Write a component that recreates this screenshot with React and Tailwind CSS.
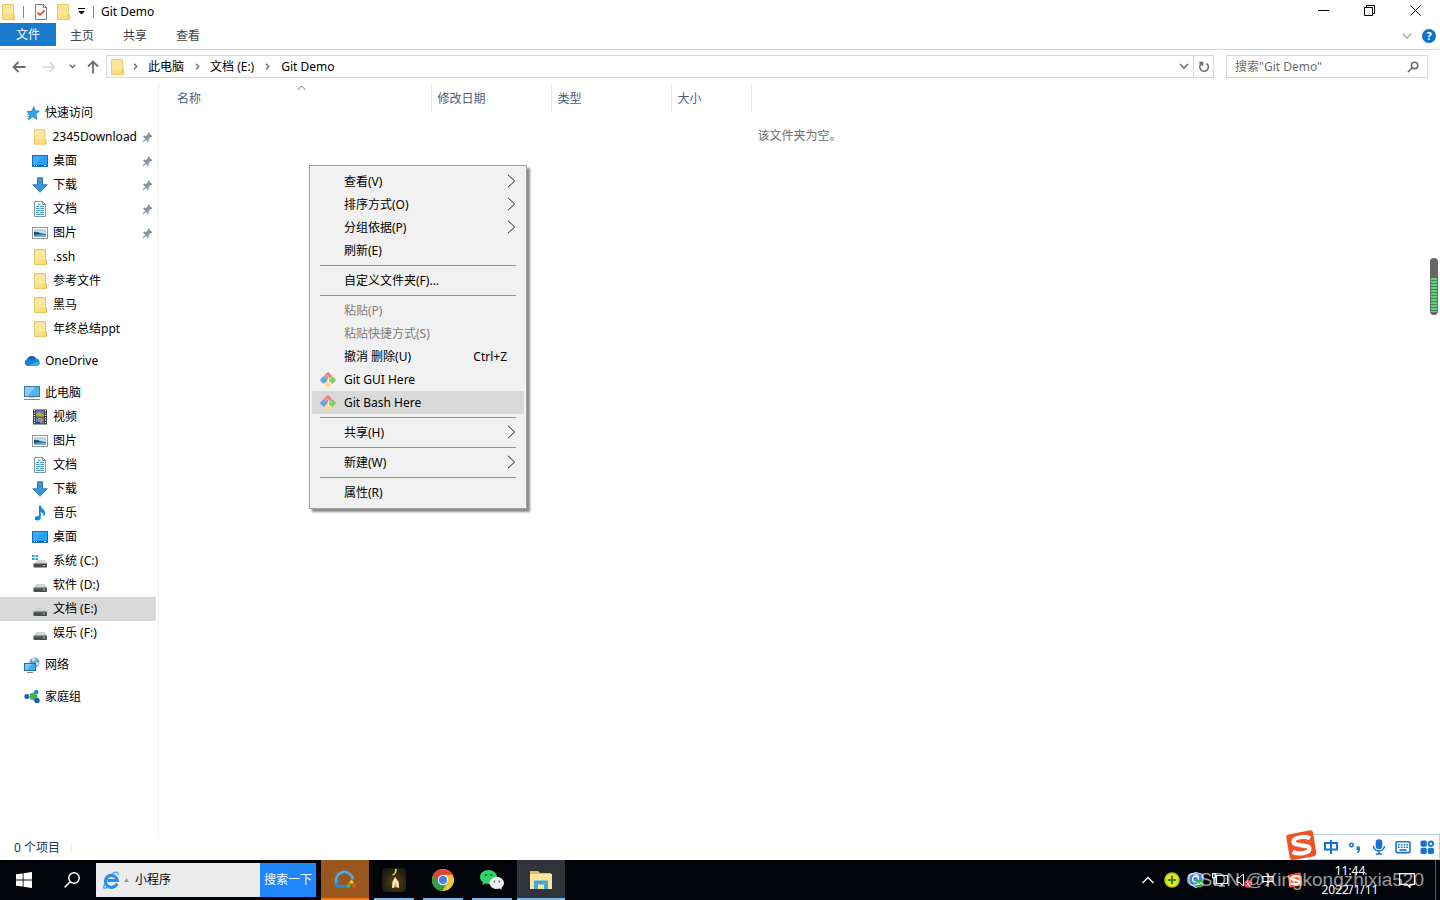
import React from "react";

/* ---------- icons ---------- */

const Folder = () => (
  <svg width="16" height="16" viewBox="0 0 16 16" aria-hidden="true">
    <path d="M2.500 .5h11V11l1-1v5.500h-12z" fill="#fbdf86" stroke="#eac763" />
    <path d="M3 1h10v9H3z" fill="#fce69b" />
    <path d="M12.500 15V11l1.500-1.400V15z" fill="#f6cf5d" />
  </svg>
);

const CheckPage = () => (
  <svg width="14" height="16" viewBox="0 0 14 16" aria-hidden="true">
    <path d="M1.500 .5h8l3 3v12h-11z" fill="#fdfdfd" stroke="#7d7d7d" />
    <path d="M9.500.5v3h3" fill="none" stroke="#7d7d7d" />
    <path d="M3.500 8.500l2.500 2.300L10.500 6.500" fill="none" stroke="#d9522b" strokeWidth="1.800" />
  </svg>
);

const Star = () => (
  <svg width="16" height="16" viewBox="0 0 16 16" aria-hidden="true">
    <path d="M9.800 1.500l1.300 4.300 4.300.3-3.500 3.100 1.200 5.300-4.200-2.700-4.300 2.900 1.300-4.700L3.200 6.500l4.700-.4z" fill="#2ea3e6" stroke="#1979bd" strokeWidth=".7" />
    <path d="M3 9.500h2.500M2.500 11.500h2.500M3 13.500h2" stroke="#6ebdec" strokeWidth="1" />
  </svg>
);

const Desktop = () => (
  <svg width="16" height="16" viewBox="0 0 16 16" aria-hidden="true">
    <rect x=".5" y="2.500" width="15" height="11" fill="#28a0f6" stroke="#1270b8" />
    <path d="M1 12.500h14" stroke="#0b5c9f" />
    <path d="M2 12.500h1M4 12.500h1M12 12.500h2" stroke="#dff1ff" />
    <path d="M1 3h9L3 12H1z" fill="#45b3fa" opacity=".6" />
  </svg>
);

const Download = () => (
  <svg width="16" height="16" viewBox="0 0 16 16" aria-hidden="true">
    <path d="M5.500 .8h5v7h4.700L8 15.300 .8 7.800h4.700z" fill="#3a95de" stroke="#2a74b5" strokeWidth=".9" />
  </svg>
);

const Doc = () => (
  <svg width="16" height="16" viewBox="0 0 16 16" aria-hidden="true">
    <path d="M2.500 .5h8l3 3v12h-11z" fill="#fcfdfe" stroke="#8a9299" />
    <path d="M10.500.5v3h3" fill="none" stroke="#8a9299" />
    <path d="M4 5.500h3M8 5.500h4M4 7.500h3.500M8.500 7.500H12M4 9.500h4.500M9 9.500h3M4 11.500h3M8 11.500h4M4 13.500h8M6 3.500h2.500" stroke="#3f93d0" strokeWidth="1.100" />
  </svg>
);

const Picture = () => (
  <svg width="16" height="16" viewBox="0 0 16 16" aria-hidden="true">
    <rect x=".5" y="2.500" width="15" height="11" fill="#fff" stroke="#8f979d" />
    <rect x="2" y="4" width="12" height="8" fill="#b5dcf4" />
    <path d="M2 7c3-1 5 1 12 2v3H2z" fill="#3c7ea8" />
    <path d="M2 7.500c2-1 4 0 6 1.500l-6 1z" fill="#2b5060" />
    <path d="M2 11c5-1 8-1 12-1v2H2z" fill="#7fb3cd" />
  </svg>
);

const Cloud = () => (
  <svg width="16" height="16" viewBox="0 0 16 16" aria-hidden="true">
    <path d="M4 13a3.600 3.600 0 0 1-.7-7 5 5 0 0 1 9.100-.2A3.700 3.700 0 0 1 13 13z" fill="#1583d8" />
    <path d="M3.300 6a5 5 0 0 1 9.100-.2c-2 0-3 .6-4 1.700C6.700 6.200 5 5.700 3.300 6z" fill="#1267b8" />
    <path d="M4 13l8.400-4.200c1.500.1 3 .7 3.400 1.800A3 3 0 0 1 13 13z" fill="#31adf2" />
  </svg>
);

const Computer = () => (
  <svg width="16" height="16" viewBox="0 0 16 16" aria-hidden="true">
    <rect x=".5" y="1.500" width="15" height="10" fill="#4fb6ef" stroke="#3a7ea8" />
    <path d="M1 2h10L4 11H1z" fill="#86d0f7" />
    <path d="M0 14.500h16" stroke="#7a8c98" />
    <path d="M5 12.500h6" stroke="#c4ced5" />
  </svg>
);

const Video = () => (
  <svg width="16" height="16" viewBox="0 0 16 16" aria-hidden="true">
    <rect x="1" y=".5" width="14" height="15" fill="#3a3a3e" />
    <path d="M2.500 1v14M13.500 1v14" stroke="#fff" strokeWidth="1.200" strokeDasharray="1.200 1.200" />
    <rect x="4" y="1.500" width="8" height="6" fill="#7a6fc0" />
    <path d="M4 5l3-2 5 3v1.500H4z" fill="#a6b23c" />
    <rect x="4" y="8.500" width="8" height="6" fill="#3d8de0" />
    <path d="M6 9h4l1 3-3 2z" fill="#d28a3c" />
    <path d="M4 13h4v1.500H4z" fill="#1d3f86" />
  </svg>
);

const Music = () => (
  <svg width="16" height="16" viewBox="0 0 16 16" aria-hidden="true">
    <path d="M7 .5h1.800c.2 3 4.200 3.700 4.200 7.500 0 1.600-.7 3-1.700 3.800.6-2.600-.3-4-2.500-4.800v5.500c0 1.800-1.700 3-3.600 3-1.500 0-2.500-.8-2.500-2 0-1.700 2.200-3 4.300-2.500z" fill="#1488dc" />
  </svg>
);

const Drive = () => (
  <svg width="16" height="16" viewBox="0 0 16 16" aria-hidden="true">
    <path d="M4 7h9l2 4H2z" fill="#d2d5d7" />
    <rect x="1.500" y="10.500" width="13.500" height="4.500" rx=".8" fill="#4a4d50" />
    <path d="M2 11h12.500" stroke="#8b8f92" />
    <path d="M11 13h2" stroke="#7de08a" />
  </svg>
);

const SystemDrive = () => (
  <svg width="16" height="16" viewBox="0 0 16 16" aria-hidden="true">
    <path d="M5 7h8l2 3.500H3z" fill="#d2d5d7" />
    <path d="M0 2h2.500v2H0zM3.500 2H6v2H3.500zM0 5h2.500v2H0zM3.500 5H6v2H3.500z" fill="#22a9c4" />
    <rect x="1.500" y="10" width="13.500" height="4.500" rx=".8" fill="#4a4d50" />
    <path d="M2 10.500h12.500" stroke="#8b8f92" />
    <path d="M11 12.500h2" stroke="#7de08a" />
  </svg>
);

const Network = () => (
  <svg width="16" height="16" viewBox="0 0 16 16" aria-hidden="true">
    <circle cx="10.500" cy="5.500" r="5" fill="#6e9fc4" />
    <path d="M8 1.500c2-1 4 0 4 1l-2 2-2-.5zM12 5l3 1-1 3-2-1z" fill="#c4dcea" />
    <rect x=".5" y="6.500" width="11" height="7" fill="#41aaf0" stroke="#1e73ae" />
    <path d="M1 7h7l-5 6H1z" fill="#79c6f7" />
    <path d="M3 15.500h6" stroke="#6e8796" />
  </svg>
);

const HomeGroup = () => (
  <svg width="16" height="16" viewBox="0 0 16 16" aria-hidden="true">
    <path d="M2.500 7L12 2.500v10z" stroke="#8ab7d8" fill="none" />
    <circle cx="2.800" cy="7.500" r="2.500" fill="#1d64b6" />
    <circle cx="12.300" cy="3" r="2.200" fill="#2a84cf" />
    <circle cx="9.500" cy="7.500" r="3.700" fill="#41b649" />
    <circle cx="13" cy="11.500" r="2.700" fill="#1c5aac" />
  </svg>
);

const Pin = () => (
  <svg width="11" height="11" viewBox="0 0 11 11" aria-hidden="true">
    <path d="M6.500.5l4 4-1 .8-.8-.2-2 2 .2 1.900-1 1-2-2.300L.8 10.500 0 10.200l3.200-3.400L1 4.800l1-1 2 .3 2-2-.4-.8z" fill="#8794a0" />
  </svg>
);

const GitLogo = () => (
  <svg width="16" height="16" viewBox="0 0 16 16" aria-hidden="true">
    <g transform="rotate(45 8 8)">
      <rect x="2.200" y="2.200" width="5.700" height="5.700" rx=".8" fill="#ef7f79" />
      <rect x="8.200" y="2.200" width="5.700" height="5.700" rx=".8" fill="#7fcf5b" />
      <rect x="2.200" y="8.200" width="5.700" height="5.700" rx=".8" fill="#6aa4e8" />
      <rect x="8.200" y="8.200" width="5.700" height="5.700" rx=".8" fill="#fbdf8c" />
    </g>
    <path d="M6.500 3L8.500 5v6M8.500 5.500l3 2.500" stroke="#fff" strokeWidth=".8" fill="none" opacity=".75" />
  </svg>
);

const Stroke = ({ d, w = 16, h = 16, width = 1, color = "currentColor" }) => (
  <svg width={w} height={h} viewBox={`0 0 ${w} ${h}`} fill="none" stroke={color} strokeWidth={width} aria-hidden="true">
    <path d={d} />
  </svg>
);

const SogouLogo = ({ size }) => (
  <svg width={size} height={size} viewBox="0 0 32 32" aria-hidden="true">
    <path d="M3.500 5.500L25 1.200q2.500-.4 3 2L31.300 24q.3 2.600-2 3.200L8 31q-2.500.4-3.200-2L1.300 8.500q-.3-2.500 2.200-3z" fill="#ee5325" />
    <path d="M25 9.500C20 6.500 8.500 8 8.500 12.800c0 5 16 2 16 7 0 4.500-11 6-17 3.200" fill="none" stroke="#fff" strokeWidth="4.200" />
  </svg>
);

/* ---------- data ---------- */

const groups = [
  {
    head: { label: "快速访问", icon: <Star /> },
    items: [
      { label: "2345Download", icon: <Folder />, pin: true },
      { label: "桌面", icon: <Desktop />, pin: true },
      { label: "下载", icon: <Download />, pin: true },
      { label: "文档", icon: <Doc />, pin: true },
      { label: "图片", icon: <Picture />, pin: true },
      { label: ".ssh", icon: <Folder /> },
      { label: "参考文件", icon: <Folder /> },
      { label: "黑马", icon: <Folder /> },
      { label: "年终总结ppt", icon: <Folder /> },
    ],
  },
  { head: { label: "OneDrive", icon: <Cloud /> }, items: [] },
  {
    head: { label: "此电脑", icon: <Computer /> },
    items: [
      { label: "视频", icon: <Video /> },
      { label: "图片", icon: <Picture /> },
      { label: "文档", icon: <Doc /> },
      { label: "下载", icon: <Download /> },
      { label: "音乐", icon: <Music /> },
      { label: "桌面", icon: <Desktop /> },
      { label: "系统 (C:)", icon: <SystemDrive /> },
      { label: "软件 (D:)", icon: <Drive /> },
      { label: "文档 (E:)", icon: <Drive />, selected: true },
      { label: "娱乐 (F:)", icon: <Drive /> },
    ],
  },
  { head: { label: "网络", icon: <Network /> }, items: [] },
  { head: { label: "家庭组", icon: <HomeGroup /> }, items: [] },
];

const menu = [
  [
    { label: "查看(V)", sub: true },
    { label: "排序方式(O)", sub: true },
    { label: "分组依据(P)", sub: true },
    { label: "刷新(E)" },
  ],
  [{ label: "自定义文件夹(F)..." }],
  [
    { label: "粘贴(P)", disabled: true },
    { label: "粘贴快捷方式(S)", disabled: true },
    { label: "撤消 删除(U)", key: "Ctrl+Z" },
    { label: "Git GUI Here", icon: <GitLogo /> },
    { label: "Git Bash Here", icon: <GitLogo />, active: true },
  ],
  [{ label: "共享(H)", sub: true }],
  [{ label: "新建(W)", sub: true }],
  [{ label: "属性(R)" }],
];

/* ---------- window parts ---------- */

function TitleBar() {
  return (
    <header className="flex h-[23px] items-center text-black">
      <span className="flex w-[23px] pr-[7px]"><Folder /></span>
      <span className="h-3 w-px bg-[#8a8a8a]" />
      <button aria-label="属性" className="ml-[10px] flex w-[14px]"><CheckPage /></button>
      <button aria-label="新建文件夹" className="ml-[7px] flex w-4"><Folder /></button>
      <button aria-label="自定义快速访问工具栏" className="ml-1 flex w-3 justify-center">
        <svg width="7" height="7" viewBox="0 0 7 7" aria-hidden="true"><path d="M0 .5h7" stroke="#000" /><path d="M0 3h7L3.500 6.500z" /></svg>
      </button>
      <span className="ml-[6px] h-3 w-px bg-[#8a8a8a]" />
      <h1 className="ml-[7px]">Git Demo</h1>
      <div className="mr-[2px] ml-auto flex h-[21px] self-start">
        <button aria-label="最小化" className="grid w-[46px] place-items-center"><Stroke w={11} h={11} d="M0 5.500h11" /></button>
        <button aria-label="还原" className="grid w-[46px] place-items-center"><Stroke w={11} h={11} d="M.5 2.500h8v8h-8zM2.500 2.500v-2h8v8h-2" /></button>
        <button aria-label="关闭" className="grid w-[46px] place-items-center"><Stroke w={11} h={11} d="M.5.5l10 10M10.500.5l-10 10" /></button>
      </div>
    </header>
  );
}

function Ribbon() {
  return (
    <div className="flex h-[27px] items-start border-b border-[#dadbdc] text-[#444]">
      <button className="h-[23px] w-14 bg-[#1979ca] text-white">文件</button>
      {["主页", "共享", "查看"].map((t) => (
        <button key={t} className="h-[25px] w-[53px] pr-px">{t}</button>
      ))}
      <div className="mr-1 ml-auto flex h-[26px] items-center gap-[10px]">
        <button aria-label="展开功能区" className="text-[#a0a6aa]"><Stroke w={10} h={6} width={1.3} d="M.8.8L5 5 9.200.8" /></button>
        <button aria-label="帮助" className="grid size-[14px] place-items-center rounded-full bg-[#0f72cf] text-[11px] leading-[14px] font-bold text-white">?</button>
      </div>
    </div>
  );
}

const Crumb = () => (
  <span className="flex w-6 justify-center text-[#6d6d6d]"><Stroke w={5} h={7} width={1.4} d="M1 .8l2.800 2.700L1 6.200" /></span>
);

function AddressRow() {
  return (
    <div className="flex h-[33px] items-center pr-3 text-[#6d6d6d]">
      <button aria-label="返回" className="ml-1 flex w-[30px] justify-center"><Stroke w={14} h={12} width={1.8} d="M13.500 6H1.500M6.500 1L1.500 6l5 5" /></button>
      <button aria-label="前进" className="flex w-[30px] justify-center text-[#d5d5d5]"><Stroke w={14} h={12} width={1.5} d="M.5 6h12M7.500 1l5 5-5 5" /></button>
      <button aria-label="最近浏览的位置" className="flex w-4 justify-center"><Stroke w={7} h={5} width={1.4} d="M.8.8l2.700 2.700L6.200.8" /></button>
      <button aria-label="上移" className="flex w-[26px] justify-center"><Stroke w={12} h={14} width={1.8} d="M6 13.500V1.500M1 6.500l5-5 5 5" /></button>
      <nav aria-label="地址" className="flex h-[23px] flex-1 items-center border border-[#d9d9d9] pl-[2px] text-black">
        <Folder />
        <span className="-ml-[2px] flex items-center gap-px">
          <Crumb /><a href="#pc">此电脑</a>
          <Crumb /><a href="#e">文档 (E:)</a>
          <Crumb /><a href="#git" className="pl-px">Git Demo</a>
        </span>
        <button aria-label="以前的位置" className="ml-auto flex w-[18px] justify-center text-[#6d6d6d]"><Stroke w={10} h={7} width={1.7} d="M1 1l4 4 4-4" /></button>
        <button aria-label="刷新" className="flex h-full w-5 items-center justify-center border-l border-[#d9d9d9] text-[#6d6d6d]">
          <Stroke w={12} h={12} width={1.6} d="M8.600 2.500a4.300 4.300 0 1 1-4.800-.2M1.200 1.500h3.300v3.400" />
        </button>
      </nav>
      <label className="ml-3 flex h-[23px] w-[202px] items-center border border-[#d9d9d9] pr-2 pl-2">
        <input aria-label="搜索" placeholder={'搜索"Git Demo"'} className="min-w-0 flex-1 bg-transparent outline-none placeholder:text-[#6d6d6d]" />
        <Stroke w={12} h={12} width={1.6} d="M7.600 1.200a3.200 3.200 0 1 1 0 6.400 3.200 3.200 0 0 1 0-6.400M5.200 6.800L.8 11.200" />
      </label>
    </div>
  );
}

function Sidebar() {
  return (
    <nav aria-label="导航窗格" className="flex w-[159px] shrink-0 flex-col gap-2 border-r border-[#f0f0f0] pt-[18px] text-black">
      {groups.map((g) => (
        <ul key={g.head.label}>
          <li>
            <a href="#nav" className="flex h-6 items-center gap-[5px] pl-6">{g.head.icon}<span>{g.head.label}</span></a>
          </li>
          {g.items.map((it) => (
            <li key={it.label} className="pr-[2px]">
              <a href="#nav" className={"flex h-6 items-center gap-[5px] pl-8 " + (it.selected ? "bg-[#d9d9d9]" : "")}>
                {it.icon}
                <span className="whitespace-nowrap">{it.label}</span>
                {it.pin && <span className="mr-[3px] ml-auto"><Pin /></span>}
              </a>
            </li>
          ))}
        </ul>
      ))}
    </nav>
  );
}

function FileTable() {
  const th = "h-[27px] border-r border-[#e5e5e5] pl-[6px] text-left font-normal";
  return (
    <table className="mt-[2px] w-full table-fixed border-collapse">
      <thead className="text-[#4c607a]">
        <tr>
          <th className="relative h-[27px] w-[272px] border-r border-[#e5e5e5] pl-[18px] text-left font-normal">
            名称
            <span className="absolute top-0 right-[125px] text-[#6d6d6d]"><Stroke w={9} h={6} d="M.5 5l4-4 4 4" /></span>
          </th>
          <th className={th + " w-[120px]"}>修改日期</th>
          <th className={th + " w-[120px]"}>类型</th>
          <th className={th + " w-[80px]"}>大小</th>
          <td />
        </tr>
      </thead>
      <tbody>
        <tr>
          <td colSpan={5} className="h-12 text-center text-[#6d6d6d]">该文件夹为空。</td>
        </tr>
      </tbody>
    </table>
  );
}

function ContextMenu() {
  return (
    <div role="menu" className="absolute top-[82px] left-[150px] w-[218px] border border-[#a0a0a0] bg-[#f1f1f1] px-[2px] py-1 text-black shadow-[3px_3px_2px_rgba(0,0,0,0.45)]">
      {menu.map((section, i) => (
        <React.Fragment key={i}>
          {i > 0 && <hr className="mx-2 my-[3px] border-[#919191]" />}
          {section.map((it) => (
            <button
              key={it.label}
              role="menuitem"
              disabled={it.disabled}
              className={
                "flex h-[23px] w-full items-center pr-2 text-left " +
                (it.active ? "bg-[#d9d9d9] " : "") +
                (it.disabled ? "text-[#7d7d7d]" : "")
              }
            >
              <span className="w-8 shrink-0 pl-2">{it.icon}</span>
              <span>{it.label}</span>
              {it.key && <span className="mr-[9px] ml-auto">{it.key}</span>}
              {it.sub && <span className="ml-auto pb-[2px] text-[#222]"><Stroke w={9} h={14} d="M1 .8l6.700 6.200L1 13.200" /></span>}
            </button>
          ))}
        </React.Fragment>
      ))}
    </div>
  );
}

function ImeBar() {
  const blue = "#1673cf";
  return (
    <div className="absolute right-0 bottom-0 flex h-[26px] w-[132px] items-center justify-end gap-2 rounded-tl border border-[#b9cfe6] bg-white pr-1">
      <span className="absolute -top-[6px] -left-[24px]"><SogouLogo size={32} /></span>
      <button aria-label="中文" className="flex">
        <svg width="16" height="16" viewBox="0 0 16 16" fill="none" stroke={blue} strokeWidth="2" aria-hidden="true"><path d="M2 4h12v6.500H2zM8 1v14" /></svg>
      </button>
      <button aria-label="标点" className="flex">
        <svg width="16" height="16" viewBox="0 0 16 16" aria-hidden="true"><circle cx="4.500" cy="6" r="1.700" fill="none" stroke={blue} strokeWidth="1.600" /><path d="M9.500 7.500h3.400v3.400q0 2.500-2.900 3.200v-1.300q1.300-.4 1.300-1.800H9.500z" fill={blue} /></svg>
      </button>
      <button aria-label="语音" className="flex">
        <svg width="16" height="16" viewBox="0 0 16 16" fill="none" stroke={blue} strokeWidth="1.500" aria-hidden="true"><rect x="5.500" y="1" width="5" height="8.500" rx="2.500" fill={blue} /><path d="M2.500 7a5.500 5 0 0 0 11 0M8 12v3M5 15h6" /></svg>
      </button>
      <button aria-label="键盘" className="flex">
        <svg width="16" height="16" viewBox="0 0 16 16" fill="none" stroke={blue} strokeWidth="1.600" aria-hidden="true"><rect x="1" y="2.800" width="14" height="10.800" rx="1" /><path d="M3 5.800h10M3 8.300h10" strokeDasharray="1.600 1.200" /><path d="M4.500 11h7" /></svg>
      </button>
      <button aria-label="工具箱" className="flex">
        <svg width="16" height="16" viewBox="0 0 16 16" fill={blue} aria-hidden="true"><rect x="1.500" y="1.500" width="6.300" height="6.300" rx="1.700" /><rect x="1.500" y="8.700" width="6.300" height="6.300" rx="1.700" /><rect x="8.700" y="8.700" width="6.300" height="6.300" rx="1.700" /><circle cx="11.800" cy="4.700" r="2.200" fill="none" stroke={blue} strokeWidth="1.900" /></svg>
      </button>
    </div>
  );
}

/* ---------- taskbar ---------- */

const apps = [
  {
    name: "搜索",
    tile: "bg-[#9a561f]",
    bar: "w-12 bg-[#ff7a0d]",
    icon: (
      <svg width="24" height="24" viewBox="0 0 24 24" fill="none" aria-hidden="true">
        <path d="M4.500 17.500A8.500 8.500 0 1 1 19.800 11.500" stroke="#4aaaf0" strokeWidth="2.600" />
        <path d="M2.500 18.500L4.500 15.500V18.500H14" stroke="#2b86d6" strokeWidth="2.400" />
        <path d="M18.500 11.500l2.300 2.800-2.300 2.500-2.300-2.500z" fill="#f3c132" />
        <path d="M15.800 15l2.200 2.500-2.200 3.200-2.800-2.900z" fill="#57b947" />
        <path d="M21 15l2.500 2.500-2.800 2.700-2.200-2.500z" fill="#e8562f" />
        <circle cx="18.500" cy="17" r="1.200" fill="#9a561f" />
      </svg>
    ),
  },
  {
    name: "游戏",
    tile: "",
    bar: "w-10 bg-[#76b9ed]",
    icon: (
      <svg width="24" height="24" viewBox="0 0 24 24" aria-hidden="true">
        <defs>
          <radialGradient id="glow" cx=".55" cy=".6" r=".6">
            <stop offset="0" stopColor="#b3782c" /><stop offset=".3" stopColor="#4a3716" /><stop offset="1" stopColor="#191b12" />
          </radialGradient>
        </defs>
        <rect width="24" height="24" rx="3" fill="url(#glow)" />
        <path d="M10 6.500c1.800-.5 3.200-2 3-5.500h1.800c.5 3.200-1.500 6-4.300 6.500z" fill="#e9c763" />
        <path d="M13 9l3.500 5 .7 6-3.200-1-4 1 .5-6z" fill="#fff0c4" />
        <path d="M13.500 14l1.500 5h-3z" fill="#f09a55" />
      </svg>
    ),
  },
  {
    name: "Chrome",
    tile: "",
    bar: "w-10 bg-[#76b9ed]",
    icon: (
      <svg width="24" height="24" viewBox="0 0 24 24" aria-hidden="true">
        <circle cx="12" cy="12" r="11" fill="#f6c433" />
        <path d="M12 12L2.500 6.500A11 11 0 0 0 11 23z" fill="#2f9e4f" />
        <path d="M11 23L16.800 14.500 7.200 14.700z" fill="#2f9e4f" />
        <path d="M2.500 6.500A11 11 0 0 1 21.500 6.800H12L7.500 14.800z" fill="#de4335" />
        <circle cx="12" cy="12" r="5.200" fill="#fff" />
        <circle cx="12" cy="12" r="4.100" fill="#4384f0" />
      </svg>
    ),
  },
  {
    name: "微信",
    tile: "",
    bar: "w-10 bg-[#76b9ed]",
    icon: (
      <svg width="26" height="24" viewBox="0 0 26 24" aria-hidden="true">
        <path d="M9.500 2C4.700 2 1 5.100 1 9c0 2.200 1.200 4.200 3.100 5.500L3.300 17l3-1.500c1 .3 2 .5 3.200.5 4.700 0 8.500-3.100 8.500-7S14.200 2 9.500 2z" fill="#2bd56a" />
        <path d="M17.800 9c-4 0-7.300 2.700-7.300 6s3.300 6 7.300 6c1 0 1.900-.1 2.700-.4l2.500 1.200-.7-2.100c1.700-1.200 2.700-2.800 2.700-4.700 0-3.300-3.200-6-7.200-6z" fill="#ededed" />
        <circle cx="6.800" cy="7" r="1.100" fill="#0c4f25" /><circle cx="12.300" cy="7" r="1.100" fill="#0c4f25" />
        <circle cx="15.400" cy="13.500" r=".9" fill="#666" /><circle cx="20.200" cy="13.500" r=".9" fill="#666" />
      </svg>
    ),
  },
  {
    name: "文件资源管理器",
    tile: "bg-[#30343a]",
    bar: "w-12 bg-[#76b9ed]",
    icon: (
      <svg width="24" height="24" viewBox="0 0 24 24" aria-hidden="true">
        <path d="M1 3h8l2 2h11v3H1z" fill="#e9bd55" />
        <path d="M1 6h22v15H1z" fill="#fce59a" />
        <path d="M5 21v-7.500q0-1 1-1h12q1 0 1 1V21h-4v-4.500H9V21z" fill="#3fa9e0" />
      </svg>
    ),
  },
];

function Taskbar() {
  return (
    <footer className="relative flex h-10 shrink-0 items-center bg-[#02040a] text-white">
      <button aria-label="开始" className="grid h-10 w-12 place-items-center">
        <svg width="16" height="16" viewBox="0 0 16 16" fill="#fff" aria-hidden="true"><path d="M0 2.300L6.700 1.400v6.200H0zM7.500 1.300L16 0v7.600H7.500zM0 8.400h6.700v6.200L0 13.700zM7.500 8.400H16V16l-8.500-1.300z" /></svg>
      </button>
      <button aria-label="搜索" className="grid h-10 w-12 place-items-center">
        <Stroke w={16} h={16} width={1.5} d="M10 .8a5.200 5.200 0 1 1 0 10.400A5.200 5.200 0 0 1 10 .8M6.200 9.800L.6 15.400" />
      </button>
      <form className="flex h-[34px] w-[220px] items-center bg-[#ececec]" onSubmit={(e) => e.preventDefault()}>
        <svg className="ml-[6px] shrink-0" width="18" height="18" viewBox="0 0 18 18" fill="none" aria-hidden="true">
          <path d="M15 12.500A6 6 0 1 1 15.300 9.500H5.500" stroke="#2b8cf0" strokeWidth="3" />
          <path d="M3 13C0 17.500 2 18 6 16M10.500 2.500c4-2 6.500-1.500 5.500 1.500" stroke="#4aa8f8" strokeWidth="1.400" />
        </svg>
        <svg className="ml-1 shrink-0" width="5" height="4" viewBox="0 0 5 4" fill="#9b9b9b" aria-hidden="true"><path d="M2.500 0L5 4H0z" /></svg>
        <input aria-label="网页搜索" defaultValue="小程序" className="ml-[6px] min-w-0 flex-1 bg-transparent text-black outline-none" />
        <button className="h-full w-14 shrink-0 bg-[#1f86fb] text-white">搜索一下</button>
      </form>
      <div className="ml-[5px] flex h-full gap-px">
        {apps.map((a) => (
          <button key={a.name} aria-label={a.name} className={"flex h-full w-12 flex-col items-center " + a.tile}>
            <span className="flex flex-1 items-center pt-[2px]">{a.icon}</span>
            <span className={"h-[2px] " + a.bar} />
          </button>
        ))}
      </div>
      <div className="ml-auto flex h-full items-center">
        <button aria-label="显示隐藏的图标" className="flex w-6 justify-center"><Stroke w={12} h={8} width={1.4} d="M.5 7L6 1.500 11.500 7" /></button>
        <button aria-label="安全卫士" className="flex w-6 justify-center">
          <svg width="16" height="16" viewBox="0 0 16 16" aria-hidden="true"><circle cx="8" cy="8" r="7.800" fill="#9fc924" /><circle cx="8" cy="8" r="6.300" fill="#f5e21b" /><path d="M8 3.800v8.400M3.800 8h8.400" stroke="#2d8a22" strokeWidth="2.200" /></svg>
        </button>
        <button aria-label="电脑管家" className="flex w-6 justify-center">
          <svg width="16" height="16" viewBox="0 0 16 16" aria-hidden="true"><path d="M8 .5l7 2v5c0 4-3 6.500-7 8-4-1.500-7-4-7-8v-5z" fill="#3c86e8" stroke="#cde2fa" /><circle cx="7.500" cy="7" r="3" fill="none" stroke="#fff" strokeWidth="1.300" /><circle cx="11.500" cy="11.500" r="4" fill="#35b04a" /><path d="M9.500 11.500l1.500 1.500 2.500-3" stroke="#fff" fill="none" /></svg>
        </button>
        <button aria-label="网络" className="flex w-6 justify-center"><Stroke w={16} h={14} width={1.2} d="M4.500 2.500h11v8h-11zM7 13h6M10 10.500V13M.6.600h3v4h-3zM2 5v6h2.500" /></button>
        <button aria-label="音量" className="flex w-6 justify-center">
          <svg width="16" height="16" viewBox="0 0 16 16" aria-hidden="true"><path d="M1 5.500h2.500L7.500 2v12L3.500 10.500H1z" fill="none" stroke="#fff" /><circle cx="12" cy="12" r="4" fill="#e0313c" /><path d="M10.500 10.500l3 3M13.500 10.500l-3 3" stroke="#fff" /></svg>
        </button>
        <button aria-label="输入法" className="w-6 text-[14px]">中</button>
        <button aria-label="搜狗输入法" className="flex w-[30px] justify-center"><SogouLogo size={16} /></button>
        <button className="flex h-full w-20 flex-col justify-center text-center">
          <time className="block leading-[19px]">11:44<br />2022/1/11</time>
        </button>
        <button aria-label="操作中心" className="flex w-[34px] justify-center"><Stroke w={16} h={15} width={1.2} d="M.6.600h14.800v10.800h-4.400v3l-3-3H.6z" /></button>
        <button aria-label="显示桌面" className="ml-[11px] h-full w-[5px] border-l border-[#5b5d62]" />
      </div>
      <p className="pointer-events-none absolute right-4 bottom-[9px] font-['Liberation_Sans',sans-serif] text-[19px] leading-[22px] text-white/60">CSDN @Xingkongzhixia520</p>
    </footer>
  );
}

export default function App() {
  return (
    <div className="flex min-h-screen flex-col bg-white font-['Noto_Sans','Noto_Sans_CJK_SC',sans-serif] text-[12px] leading-4">
      <TitleBar />
      <Ribbon />
      <AddressRow />
      <div className="relative flex flex-1">
        <Sidebar />
        <main className="relative min-w-0 flex-1">
          <FileTable />
          <ContextMenu />
        </main>
        <div className="absolute top-[175px] right-[2px] flex h-[57px] w-2 flex-col overflow-hidden rounded-full bg-[#666]">
          <span className="mx-px mt-5 mb-[3px] flex-1 bg-[repeating-linear-gradient(to_bottom,#5fd080_0px,#5fd080_2px,#3c8a55_2px,#3c8a55_3px)]" />
        </div>
      </div>
      <div className="relative flex h-[25px] items-center pt-px pl-[14px] text-[#1e395b]">
        <span>0 个项目</span>
        <span className="ml-[11px] h-3 w-px bg-[#ededed]" />
        <ImeBar />
      </div>
      <Taskbar />
    </div>
  );
}
